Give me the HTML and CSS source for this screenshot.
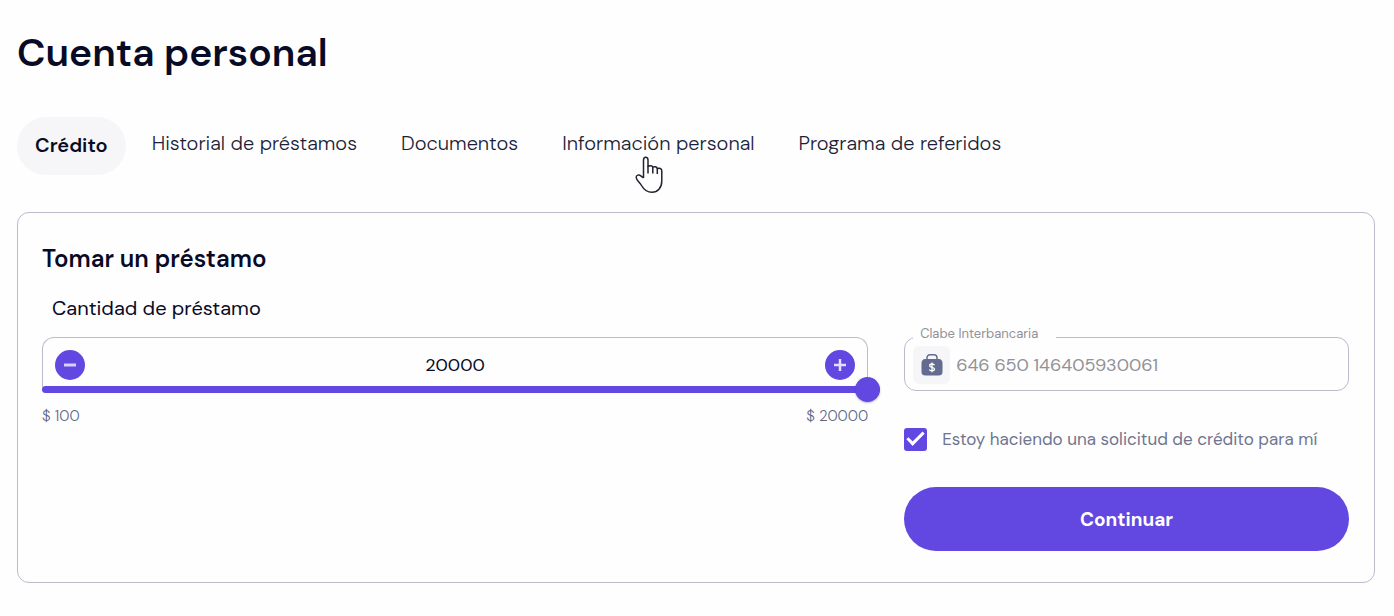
FILE: index.html
```html
<!DOCTYPE html>
<html lang="es">
<head>
    <meta charset="UTF-8">
    <meta name="viewport" content="width=device-width, initial-scale=1.0">
    <title>Cuenta personal</title>
    <link rel="stylesheet" href="styles.css">
</head>
<body>
    <h1>Cuenta personal</h1>

    <nav class="tabs">
        <a class="tab active" href="#credito">Crédito</a>
        <a class="tab" href="#historial">Historial de préstamos</a>
        <a class="tab" href="#documentos">Documentos</a>
        <a class="tab" href="#informacion">Información personal
            <svg class="pointer" viewBox="0 0 28 38" aria-hidden="true">
                <path d="M8.500 22V4.200C8.500 .4 13 .4 13 4.200V10.500C14.500 9.300 17.200 9.400 17.800 11.200C19.500 10.300 21.800 10.600 22.300 12.500C24.500 11.800 26.800 12.500 26.800 15V25C26.800 32 22.500 36.300 17 36.300C11.500 36.300 8.800 33.500 6.500 29.500C4.500 26 1.500 24.500 1.200 21.500C1 19 4 18.300 5.800 19.800L8.500 22" fill="#fff" stroke="#222230" stroke-width="1.500" stroke-linejoin="round"/>
                <path d="M13 10V17.500M17.800 11.200V17.500M22.300 12.500V18" fill="none" stroke="#222230" stroke-width="1.500"/>
            </svg>
        </a>
        <a class="tab" href="#referidos">Programa de referidos</a>
    </nav>

    <form class="card">
        <h2>Tomar un préstamo</h2>
        <div class="columns">
            <div class="loan">
                <label class="loan-label" for="amount">Cantidad de préstamo</label>
                <div class="amount-box">
                    <button class="round" type="button" aria-label="Menos">
                        <svg viewBox="0 0 30 30"><path d="M9 15H21" stroke="#d9d2ff" stroke-width="3"/></svg>
                    </button>
                    <input class="amount" id="amount" type="text" value="20000">
                    <button class="round" type="button" aria-label="Más">
                        <svg viewBox="0 0 30 30"><path d="M9 15H21M15 9V21" stroke="#e4dfff" stroke-width="2.500"/></svg>
                    </button>
                </div>
                <input class="slider" type="range" min="100" max="20000" value="20000" aria-label="Cantidad de préstamo">
                <div class="limits">
                    <span>$ 100</span>
                    <span>$ 20000</span>
                </div>
            </div>

            <div class="details">
                <fieldset class="field">
                    <legend><label for="clabe">Clabe Interbancaria</label></legend>
                    <span class="field-icon">
                        <svg viewBox="0 0 22 22" aria-hidden="true">
                            <path d="M6 6V4C6 2 7 .8 9 .8H13C15 .8 16 2 16 4V6" fill="none" stroke="#646b91" stroke-width="1.500"/>
                            <path d="M4 5H18C20 5 21.500 7 21.500 9V18C21.500 20.500 20 21.500 17.500 21.500H4.500C2 21.500 .5 20.500 .5 18V9C.5 7 2 5 4 5Z" fill="#646b91"/>
                            <path d="M13.500 11.300C13 10.300 12 10 11 10C9.500 10 8.700 10.700 8.700 11.700C8.700 14 13.500 12.800 13.500 15C13.500 16.200 12.500 16.800 11 16.800C9.800 16.800 8.800 16.400 8.300 15.500M11 8.500V18.200" fill="none" stroke="#fff" stroke-width="1.300"/>
                        </svg>
                    </span>
                    <input class="clabe" id="clabe" type="text" value="646 650 146405930061">
                </fieldset>

                <label class="check">
                    <input type="checkbox" checked>
                    <span>Estoy haciendo una solicitud de crédito para mí</span>
                </label>

                <button class="submit" type="submit">Continuar</button>
            </div>
        </div>
    </form>
</body>
</html>
```
FILE: styles.css
```css
* {
    box-sizing: border-box;
    margin: 0;
    padding: 0;
}

body {
    font-family: "DM Sans", Inter, "Liberation Sans", sans-serif;
    background-color: #fefefe;
    color: #080b26;
    padding: 29px 19px 32px 17px;
}

h1 {
    font-size: 39px;
    font-weight: 600;
    line-height: 48px;
    margin-bottom: 40px;
}

h2 {
    font-size: 24px;
    font-weight: 600;
    line-height: 34px;
    margin-bottom: 18px;
}

button,
input {
    font-family: inherit;
}

/* tabs */
.tabs {
    display: flex;
    gap: 8px;
    margin-bottom: 37px;
}

.tab {
    position: relative;
    padding: 0 18px;
    border-radius: 29px;
    font-size: 20px;
    font-weight: 300;
    line-height: 52px;
    height: 58px;
    color: #1c1f3a;
    text-decoration: none;
    white-space: nowrap;
}

.tab.active {
    background-color: #f6f6f9;
    color: #080b26;
    font-weight: 600;
    line-height: 56px;
}

.pointer {
    position: absolute;
    left: 91px;
    top: 39px;
    width: 28px;
    height: 38px;
}

/* loan card */
.card {
    border: 1px solid #babccc;
    border-radius: 12px;
    padding: 29px 25px 31px 24px;
}

.columns {
    display: grid;
    grid-template-columns: 13fr 7fr;
    gap: 36px;
}

.loan-label {
    display: block;
    padding-left: 10px;
    font-size: 20px;
    line-height: 28px;
    margin-bottom: 15px;
}

.amount-box {
    display: flex;
    align-items: center;
    height: 52px;
    padding: 2px 12px 0;
    border: 1px solid #babccc;
    border-bottom: 0;
    border-radius: 12px 12px 0 0;
}

.round {
    flex: none;
    width: 30px;
    height: 30px;
    border: 0;
    border-radius: 50%;
    background-color: #6247e0;
    cursor: pointer;
}

.round svg {
    display: block;
}

.amount {
    flex: 1;
    min-width: 0;
    border: 0;
    outline: 0;
    background: none;
    color: #080b26;
    font-size: 18px;
    text-align: center;
}

/* the thumb is centred on the end of the box */
.slider {
    -webkit-appearance: none;
    appearance: none;
    display: block;
    position: relative;
    width: calc(100% + 12px);
    height: 26px;
    margin-top: -13px;
    background: none;
}

.slider::-webkit-slider-runnable-track {
    height: 7px;
    border-radius: 4px;
    background-color: #6247e0;
}

.slider::-webkit-slider-thumb {
    -webkit-appearance: none;
    width: 25px;
    height: 25px;
    margin-top: -9px;
    border-radius: 50%;
    background-color: #6247e0;
    box-shadow: 0 1px 2px rgba(40, 30, 100, 0.3);
}

.limits {
    display: flex;
    justify-content: space-between;
    margin-top: 4px;
    font-size: 15px;
    font-weight: 300;
    line-height: 20px;
    color: #5f6685;
}

.details {
    padding-top: 34px;
}

.field {
    display: flex;
    align-items: center;
    height: 63px;
    min-width: 0;
    padding: 0 8px 7px;
    border: 1px solid #babccc;
    border-radius: 12px;
}

.field legend {
    padding: 0 18px 6px 7px;
    font-size: 13px;
    line-height: 12px;
    color: #929298;
}

.field legend label {
    display: block;
}

.field-icon {
    display: flex;
    align-items: center;
    justify-content: center;
    flex: none;
    width: 37px;
    height: 38px;
    border-radius: 6px;
    background-color: #f6f6f9;
}

.field-icon svg {
    width: 22px;
    height: 22px;
}

.clabe {
    flex: 1;
    min-width: 0;
    padding-left: 6px;
    border: 0;
    outline: 0;
    background: none;
    color: #929298;
    font-size: 18px;
}

.check {
    display: flex;
    align-items: center;
    gap: 15px;
    margin: 37px 0 36px;
    font-size: 17px;
    line-height: 23px;
    color: #6f7590;
}

.check input {
    flex: none;
    -webkit-appearance: none;
    appearance: none;
    width: 23px;
    height: 23px;
    border-radius: 3px;
    background-color: #6247e0;
}

.check input:checked::before {
    content: "";
    display: block;
    width: 14px;
    height: 6px;
    margin: 4px 0 0 3px;
    border-left: 3px solid #fff;
    border-bottom: 3px solid #fff;
    transform: rotate(-45deg);
}

.submit {
    display: block;
    width: 100%;
    height: 64px;
    border: 0;
    border-radius: 32px;
    background-color: #6247e0;
    color: #fff;
    font-size: 19px;
    font-weight: 700;
    cursor: pointer;
}
```
